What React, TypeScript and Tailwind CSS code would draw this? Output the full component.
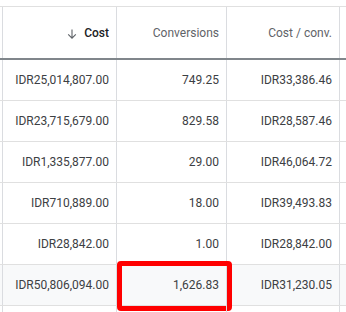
const rows = [
  ["IDR25,014,807.00", "749.25", "IDR33,386.46"],
  ["IDR23,715,679.00", "829.58", "IDR28,587.46"],
  ["IDR1,335,877.00", "29.00", "IDR46,064.72"],
  ["IDR710,889.00", "18.00", "IDR39,493.83"],
  ["IDR28,842.00", "1.00", "IDR28,842.00"],
];

const total = ["IDR50,806,094.00", "1,626.83", "IDR31,230.05"];

const Row = ({ cells, isTotal }: { cells: string[]; isTotal?: boolean }) => {
  return (
    <div
      className={`flex h-[41px] border-b border-[#e0e0e0] text-[12px] text-[#3c4043] ${
        isTotal ? "bg-[#f8f9fa]" : "bg-white"
      }`}
    >
      <div className="w-[3px] shrink-0 border-r border-[#dadce0]" />
      <div className="w-[114px] shrink-0 border-r border-[#dadce0] flex items-center justify-end pr-[7px]">
        {cells[0]}
      </div>
      <div className="relative w-[110px] shrink-0 border-r border-[#dadce0] flex items-center justify-end pr-[7px]">
        {cells[1]}
        {isTotal && (
          <div className="absolute left-0 -top-[4px] w-[115px] h-[50px] border-[5px] border-[#ff0000] rounded-[4px]" />
        )}
      </div>
      <div className="w-[113px] shrink-0 border-r border-[#dadce0] flex items-center justify-end pr-[7px]">
        {cells[2]}
      </div>
      <div className="flex-1" />
    </div>
  );
};

const App = () => {
  return (
    <div
      className="w-[346px] h-[312px] overflow-hidden bg-white pt-[6px]"
      style={{ fontFamily: "Roboto, 'Liberation Sans', sans-serif" }}
    >
      <div className="flex h-[54px] border-t border-[#e0e0e0] border-b-2 border-b-[#80868b] text-[12px]">
        <div className="w-[3px] shrink-0 border-r border-[#dadce0]" />
        <div className="w-[114px] shrink-0 border-r border-[#dadce0] flex items-center justify-end pr-[7px] gap-[7px] text-[#202124] font-medium">
          <svg width="10" height="10" viewBox="0 0 10 10" className="mt-[2px]">
            <path d="M5 0.5 V9 M1.2 5.4 L5 9.2 L8.8 5.4" stroke="#5f6368" strokeWidth="1.1" fill="none" />
          </svg>
          <span>Cost</span>
        </div>
        <div className="w-[110px] shrink-0 border-r border-[#dadce0] flex items-center justify-end pr-[7px] text-[#5f6368]">
          Conversions
        </div>
        <div className="w-[113px] shrink-0 border-r border-[#dadce0] flex items-center justify-end pr-[7px] text-[#5f6368]">
          Cost / conv.
        </div>
        <div className="flex-1" />
      </div>
      {rows.map((r, i) => (
        <Row key={i} cells={r} />
      ))}
      <Row cells={total} isTotal />
      <Row cells={["", "", ""]} />
    </div>
  );
};

export default App;
